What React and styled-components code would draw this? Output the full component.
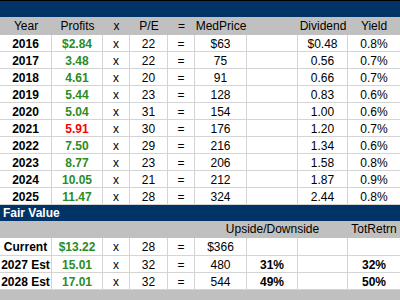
import React from "react";
import styled, { createGlobalStyle } from "styled-components";

const GlobalStyle = createGlobalStyle`
  html, body {
    margin: 0;
    padding: 0;
    background: #ffffff;
  }
  body {
    font-family: "Liberation Sans", Arial, sans-serif;
    font-size: 12px;
    color: #000;
  }
`;

const COLS = "52px 51px 27px 38px 27px 52px 51px 50px 52px";
const NAVY = "#003366";
const GRAY = "#c0c0c0";
const GRID = "#d4d4d4";
const GREEN = "#2b8c1f";
const RED = "#ff0000";

const Sheet = styled.div`
  width: 400px;
  height: 300px;
  overflow: hidden;
  display: flex;
  flex-direction: column;
  background: ${GRAY};
`;

const TopRule = styled.div`
  height: 1px;
  background: #000;
`;

const Band = styled.div`
  height: ${(p) => p.$h || 16}px;
  background: ${NAVY};
  color: #fff;
  font-weight: bold;
  line-height: ${(p) => p.$h || 16}px;
  padding-left: 3px;
  white-space: nowrap;
`;

const HeadRow = styled.div`
  display: grid;
  grid-template-columns: ${COLS};
  height: ${(p) => p.$h || 17}px;
  background: ${GRAY};
  line-height: ${(p) => p.$h || 17}px;
`;

const HeadCell = styled.div`
  text-align: center;
  white-space: nowrap;
  display: flex;
  justify-content: center;
  overflow: visible;
`;

const Row = styled.div`
  display: grid;
  grid-template-columns: ${COLS};
  height: ${(p) => p.$h || 17}px;
  box-sizing: border-box;
  background: #fff;
  border-bottom: 1px solid ${GRID};
`;

const Cell = styled.div`
  box-sizing: border-box;
  border-right: ${(p) => (p.$last ? "none" : `1px solid ${GRID}`)};
  display: flex;
  align-items: center;
  justify-content: center;
  white-space: nowrap;
  font-weight: ${(p) => (p.$bold ? "bold" : "normal")};
  color: ${(p) => p.$color || "#000"};
  padding-top: 1px;
`;

const Filler = styled.div`
  flex: 1;
  background: ${GRAY};
`;

const history = [
  ["2016", "$2.84", "22", "$63", "$0.48", "0.8%"],
  ["2017", "3.48", "22", "75", "0.56", "0.7%"],
  ["2018", "4.61", "20", "91", "0.66", "0.7%"],
  ["2019", "5.44", "23", "128", "0.83", "0.6%"],
  ["2020", "5.04", "31", "154", "1.00", "0.6%"],
  ["2021", "5.91", "30", "176", "1.20", "0.7%", true],
  ["2022", "7.50", "29", "216", "1.34", "0.6%"],
  ["2023", "8.77", "23", "206", "1.58", "0.8%"],
  ["2024", "10.05", "21", "212", "1.87", "0.9%"],
  ["2025", "11.47", "28", "324", "2.44", "0.8%"],
];

const fair = [
  ["Current", "$13.22", "28", "$366", "", "", 18],
  ["2027 Est", "15.01", "32", "480", "31%", "32%", 17],
  ["2028 Est", "17.01", "32", "544", "49%", "50%", 17],
];

export default function App() {
  return (
    <>
      <GlobalStyle />
      <Sheet>
        <TopRule />
        <Band $h={16} />
        <HeadRow $h={18}>
          <HeadCell>Year</HeadCell>
          <HeadCell>Profits</HeadCell>
          <HeadCell>x</HeadCell>
          <HeadCell>P/E</HeadCell>
          <HeadCell>=</HeadCell>
          <HeadCell>MedPrice</HeadCell>
          <HeadCell />
          <HeadCell>Dividend</HeadCell>
          <HeadCell>Yield</HeadCell>
        </HeadRow>
        {history.map(([yr, prof, pe, price, div, yld, neg]) => (
          <Row key={yr}>
            <Cell $bold>{yr}</Cell>
            <Cell $bold $color={neg ? RED : GREEN}>{prof}</Cell>
            <Cell>x</Cell>
            <Cell>{pe}</Cell>
            <Cell>=</Cell>
            <Cell>{price}</Cell>
            <Cell />
            <Cell>{div}</Cell>
            <Cell $last>{yld}</Cell>
          </Row>
        ))}
        <Band $h={16}>Fair Value</Band>
        <HeadRow $h={17}>
          <HeadCell />
          <HeadCell />
          <HeadCell />
          <HeadCell />
          <HeadCell />
          <HeadCell />
          <HeadCell>Upside/Downside</HeadCell>
          <HeadCell />
          <HeadCell>TotRetrn</HeadCell>
        </HeadRow>
        {fair.map(([label, prof, pe, price, up, tot, h]) => (
          <Row key={label} $h={h}>
            <Cell $bold>{label}</Cell>
            <Cell $bold $color={GREEN}>{prof}</Cell>
            <Cell>x</Cell>
            <Cell>{pe}</Cell>
            <Cell>=</Cell>
            <Cell>{price}</Cell>
            <Cell $bold>{up}</Cell>
            <Cell />
            <Cell $last $bold>{tot}</Cell>
          </Row>
        ))}
        <Filler />
      </Sheet>
    </>
  );
}
